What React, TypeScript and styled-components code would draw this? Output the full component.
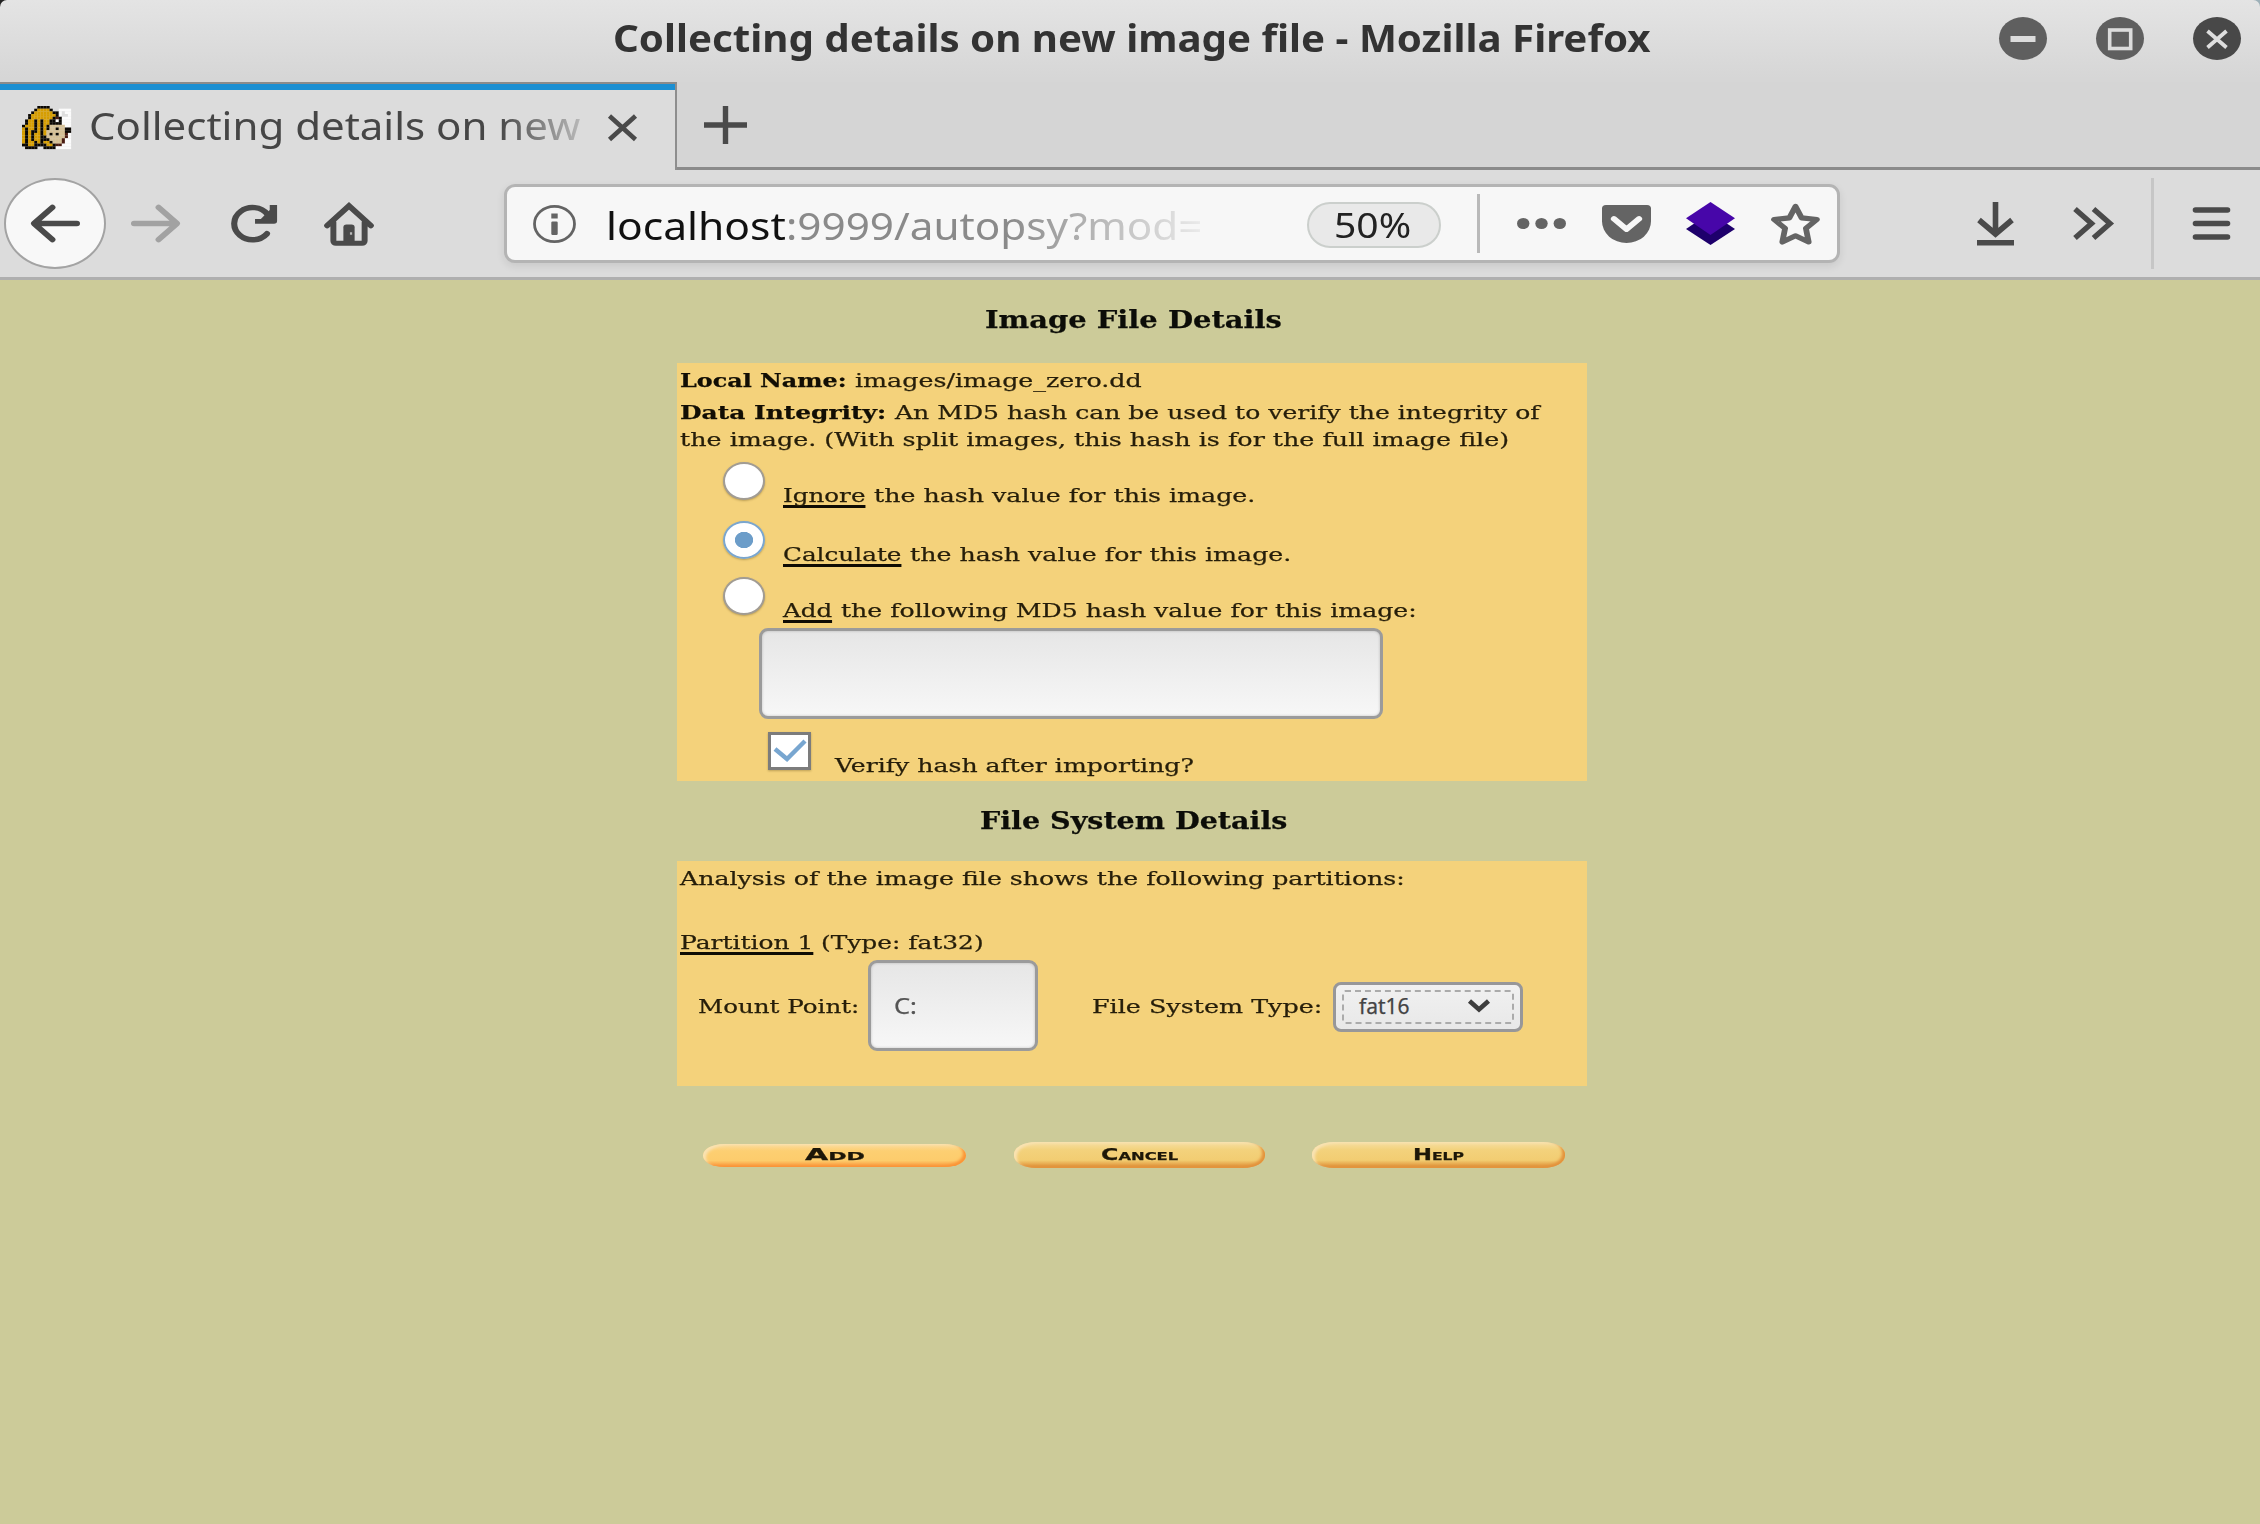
import React, { useLayoutEffect, useRef, useState } from "react";
import styled, { createGlobalStyle } from "styled-components";

const Global = createGlobalStyle`
  * { box-sizing: border-box; }
  body { margin: 0; background: #cccb99; }
`;

const sans = `"Noto Sans", "Open Sans", sans-serif`;
const serif = `"DejaVu Serif", "Liberation Serif", serif`;

/* ---------- text that is stretched to a fixed width ---------- */

const FitBox = styled.span<{ $w: number; $ml?: number }>`
  display: block;
  flex: none;
  width: ${(p) => p.$w}px;
  margin-left: ${(p) => p.$ml ?? 0}px;
  white-space: nowrap;
`;

const FitInner = styled.span<{ $u?: boolean }>`
  display: inline-block;
  transform-origin: 0 50%;
  text-decoration: ${(p) => (p.$u ? "underline" : "none")};
  text-decoration-color: #0f0c04;
  text-decoration-thickness: 2.5px;
  text-underline-offset: 3px;
  text-decoration-skip-ink: none;
`;

function Fit({ w, ml, u, children }: { w: number; ml?: number; u?: boolean; children: React.ReactNode }) {
  const ref = useRef<HTMLSpanElement>(null);
  const [scale, setScale] = useState(1);
  useLayoutEffect(() => {
    if (ref.current) setScale(w / ref.current.offsetWidth);
  }, [w]);
  return (
    <FitBox $w={w} $ml={ml}>
      <FitInner ref={ref} $u={u} style={{ transform: `scaleX(${scale})` }}>
        {children}
      </FitInner>
    </FitBox>
  );
}

/* ---------- window chrome ---------- */

const Window = styled.div`
  width: 2260px;
  height: 1524px;
  overflow: hidden;
  background: #cccb99;
  display: flex;
  flex-direction: column;
`;

const TitleBarBack = styled.div`
  flex: none;
  background: linear-gradient(90deg, #222 50%, #9db0b8 50%);
`;

const TitleBar = styled.header`
  height: 82px;
  display: flex;
  align-items: flex-start;
  border-radius: 7px 7px 0 0;
  background: linear-gradient(#e4e4e4, #d6d6d6 78px);
  font: bold 38px/52px ${sans};
  color: #333;
`;

const TitleText = styled.div`
  margin: 11px 0 0 613px;
`;

const WindowButtons = styled.div`
  display: flex;
  gap: 49px;
  margin: 17px 0 0 348px;
`;

const TabStrip = styled.div`
  flex: none;
  height: 88px;
  display: flex;
  background: #d5d5d5;
`;

const Tab = styled.div`
  width: 677px;
  border-top: 2px solid #8b8b8b;
  border-right: 2px solid #8e8e8e;
  background: #dcdcdc;
`;

const TabInner = styled.div`
  height: 86px;
  border-top: 6px solid #1b8fd2;
  display: flex;
  align-items: flex-start;
  padding-left: 22px;
  font: 39px/52px ${sans};
  color: #464646;
`;

const TabLabel = styled.div`
  margin: 9px 0 0 16px;
  width: 495px;
  padding-left: 2px;
  mask-image: linear-gradient(90deg, #000 410px, rgba(0, 0, 0, 0.25) 492px);
`;

const StripRest = styled.div`
  flex: 1;
  border-bottom: 3px solid #8b8b8b;
  padding: 24px 0 0 27px;
`;

const Toolbar = styled.nav`
  flex: none;
  height: 110px;
  border-bottom: 3px solid #afafaf;
  background: #dcdcdc;
  display: flex;
  align-items: center;
`;

const BackButton = styled.button`
  flex: none;
  width: 102px;
  height: 91px;
  margin-left: 4px;
  padding: 0 0 0 1px;
  border: 2px solid #a3a3a3;
  border-radius: 50%;
  background: #f8f8f8;
  display: flex;
  align-items: center;
  justify-content: center;
`;

const Svg = styled.svg<{ $ml?: number; $mt?: number }>`
  display: block;
  flex: none;
  overflow: visible;
  margin-left: ${(p) => p.$ml ?? 0}px;
  margin-top: ${(p) => p.$mt ?? 0}px;
`;

const UrlBar = styled.div`
  flex: none;
  width: 1336px;
  height: 79px;
  margin-left: 130px;
  border: 3px solid #b4b4b4;
  border-radius: 11px;
  background: #f7f7f7;
  box-shadow: 0 3px 9px rgba(0, 0, 0, 0.09);
  display: flex;
  align-items: center;
  font: 39px/52px ${sans};
`;

const UrlText = styled.div`
  display: flex;
  width: 600px;
  margin: 2px 0 0 30px;
  color: #8a8a8a;
  mask-image: linear-gradient(90deg, #000 400px, rgba(0, 0, 0, 0.12) 594px);
`;

const Host = styled.div`
  color: #111;
`;

const Zoom = styled.div`
  width: 134px;
  height: 46px;
  margin: 3px 0 0 101px;
  padding-left: 25px;
  border: 2px solid #cbcfcc;
  border-radius: 24px;
  background: #e9e9e9;
  color: #222;
  font: 34px/42px ${sans};
`;

const Rule = styled.div<{ $h: number; $ml: number; $c: string }>`
  width: 3px;
  height: ${(p) => p.$h}px;
  margin-left: ${(p) => p.$ml}px;
  background: ${(p) => p.$c};
`;

/* ---------- page ---------- */

const Page = styled.main`
  width: 910px;
  margin-left: 677px;
  font: 18px/27px ${serif};
  color: #261e0a;
  -webkit-text-stroke: 0.25px currentColor;
`;

const Heading = styled.h3<{ $h: number; $pt: number; $pl: number }>`
  margin: 0;
  height: ${(p) => p.$h}px;
  padding: ${(p) => p.$pt}px 0 0 ${(p) => p.$pl}px;
  font: bold 24px/30px ${serif};
  color: #0c0d08;
`;

const Panel = styled.section<{ $h: number }>`
  height: ${(p) => p.$h}px;
  padding: 4px 0 0 3px;
  background: #f4d27b;
`;

const Line = styled.div<{ $mt?: number }>`
  display: flex;
  margin-top: ${(p) => p.$mt ?? 0}px;
`;

const Strong = styled.b`
  color: #120e04;
`;

const OptionRow = styled.div<{ $h: number; $pl?: number }>`
  display: flex;
  align-items: flex-start;
  height: ${(p) => p.$h}px;
  padding-left: ${(p) => p.$pl ?? 43}px;
`;

const Radio = styled.span<{ $on?: boolean }>`
  flex: none;
  width: 42px;
  height: 38px;
  margin: 9px 18px 0 0;
  border-radius: 50%;
  border: 2px solid ${(p) => (p.$on ? "#7aa6cf" : "#a19c94")};
  background: ${(p) => (p.$on ? "radial-gradient(9.5px 8.5px at center, #6c9dc9 92%, #fff 100%)" : "#fff")};
  box-shadow: 0 1px 2px rgba(90, 70, 20, 0.35);
`;

const Label = styled.label<{ $mt: number }>`
  display: flex;
  margin-top: ${(p) => p.$mt}px;
`;

const Check = styled.span`
  flex: none;
  width: 43px;
  height: 38px;
  margin: 13px 24px 0 0;
  border: 3px solid #7c7c7c;
  background: #fff;
  box-shadow: 0 1px 2px rgba(90, 70, 20, 0.35);
`;

const Field = styled.div<{ $w: number; $ml: number }>`
  flex: none;
  width: ${(p) => p.$w}px;
  height: 91px;
  margin-left: ${(p) => p.$ml}px;
  padding: 30px 0 0 23px;
  border: 3px solid #9b9b9b;
  border-radius: 9px;
  background: linear-gradient(#e6e6e6, #f7f7f7);
  box-shadow: inset 0 0 3px rgba(0, 0, 0, 0.2);
  font: 21px/27px ${sans};
  color: #555;
`;

const MountRow = styled.div`
  display: flex;
  align-items: flex-start;
  margin-top: 4px;
`;

const MountLabel = styled.div<{ $ml: number }>`
  margin: 33px 0 0 ${(p) => p.$ml}px;
`;

const Select = styled.div`
  width: 190px;
  height: 50px;
  margin: 22px 0 0 11px;
  padding: 5px 6px;
  border: 3px solid #979799;
  border-radius: 8px;
  background: linear-gradient(#f1f1f1, #e8e8e8);
`;

const SelectInner = styled.div`
  height: 34px;
  display: flex;
  align-items: center;
  border: 2px dashed #ababab;
  border-radius: 3px;
  padding: 0 0 2px 15px;
  font: 21px/27px ${sans};
  color: #444;
`;

const Actions = styled.div`
  display: flex;
  align-items: flex-start;
  padding: 56px 0 0 26px;
`;

const Pill = styled.button<{ $w: number; $ml?: number; $add?: boolean; $pl: number }>`
  flex: none;
  width: ${(p) => p.$w}px;
  height: ${(p) => (p.$add ? 23 : 26)}px;
  margin: ${(p) => (p.$add ? 2 : 0)}px 0 0 ${(p) => p.$ml ?? 0}px;
  padding: 0 0 0 ${(p) => p.$pl}px;
  border: 0;
  border-radius: 22px / 12px;
  background: ${(p) =>
    p.$add
      ? "linear-gradient(#fbdc9c, #fdcf72 30%, #fdcc6c 72%, #fa9a3e 96%)"
      : "linear-gradient(#f6dfa4, #f3d27c 30%, #f2cd72 70%, #e2983f 92%)"};
  box-shadow: inset -4px -2px 3px -1px ${(p) => (p.$add ? "#fb9436" : "#e3923c")},
    inset 4px 2px 3px -1px #f9e3b4;
  font: ${(p) => (p.$add ? 15 : 16)}px/${(p) => (p.$add ? 21 : 24)}px "DejaVu Sans", sans-serif;
  font-weight: bold;
  font-variant: small-caps;
  text-align: left;
  color: #1d1708;
`;

/* ---------- favicon, drawn from a pixel map ---------- */

const PIXELS = [
  ".....KKKK.......",
  "....KYYYYK..WWWW",
  "...KYYYYYYKKWGWW",
  "..KYYYYYYYYKWGGW",
  "..KYYYYYYYKRKWWW",
  ".KYYKYKYYKKWKWWW",
  ".KYYKYKYYKKKKWWW",
  "KYYYKYKYKTTTTTWW",
  "YKYYKYKYKTTKTTKK",
  "YKYKKYKYTTTTTTKK",
  "YKYKYYKYTKTKTTRW",
  "YKYKYYKKTTTTTTRW",
  "YKYKYYKKKTTTTRWW",
  "YKYYKYKYYKTTTRWW",
  "KKYYKKKKYYKRRWWW",
  ".KKKK..KKKKWWWWW",
];
const INK: Record<string, string> = {
  K: "#0a0703",
  Y: "#d69d00",
  T: "#d5c096",
  W: "#fbfbfb",
  G: "#dedede",
  R: "#4a1c12",
};

function Favicon() {
  return (
    <Svg $mt={16} width={49} height={43} viewBox="0 0 16 16" preserveAspectRatio="none">
      {PIXELS.map((row, y) =>
        row.split("").map((c, x) =>
          c === "." ? null : <rect key={`${x}-${y}`} x={x} y={y} width={1.04} height={1.04} fill={INK[c]} />
        )
      )}
    </Svg>
  );
}

/* ---------- icons ---------- */

function Icon({ w = 49, h = 43, ml, mt, box = "0 0 16 16", children }: any) {
  return (
    <Svg $ml={ml} $mt={mt} width={w} height={h} viewBox={box} preserveAspectRatio="none">
      {children}
    </Svg>
  );
}

const ARROW =
  "M15 7H3.414l4.293-4.293a1 1 0 0 0-1.414-1.414l-6 6a1 1 0 0 0 0 1.414l6 6a1 1 0 0 0 1.414-1.414L3.414 9H15a1 1 0 0 0 0-2z";
const DARK = "#4a4a4a";
const MID = "#646464";

function WinButton({ fill, children }: { fill: string; children: React.ReactNode }) {
  return (
    <Svg width={48} height={43} viewBox="0 0 48 43">
      <ellipse cx={24} cy={21.5} rx={24} ry={21.5} fill={fill} />
      {children}
    </Svg>
  );
}

export default function App() {
  return (
    <Window>
      <Global />
      <TitleBarBack>
        <TitleBar>
          <TitleText>
            <Fit w={1038}>Collecting details on new image file - Mozilla Firefox</Fit>
          </TitleText>
          <WindowButtons>
            <WinButton fill="#5f5f5f">
              <rect x={11.5} y={19} width={25} height={6} fill="#dcdcdc" />
            </WinButton>
            <WinButton fill="#5f5f5f">
              <rect x={13.7} y={13} width={21} height={18.5} fill="none" stroke="#dcdcdc" strokeWidth={3.6} />
            </WinButton>
            <WinButton fill="#484848">
              <path d="M14.5 14L33.5 30.5M33.5 14L14.5 30.5" stroke="#dedede" strokeWidth={3.8} />
            </WinButton>
          </WindowButtons>
        </TitleBar>
      </TitleBarBack>

      <TabStrip>
        <Tab>
          <TabInner>
            <Favicon />
            <TabLabel>
              <Fit w={491}>Collecting details on new</Fit>
            </TabLabel>
            <Icon w={31} h={27} ml={25} mt={24} box="0 0 31 27">
              <path d="M2.5 2L28.5 25.5M28.5 2L2.5 25.5" stroke={DARK} strokeWidth={4.6} />
            </Icon>
          </TabInner>
        </Tab>
        <StripRest>
          <Icon w={43} h={38} box="0 0 43 38">
            <path d="M21.5 0V38M0 19H43" stroke={DARK} strokeWidth={5.4} />
          </Icon>
        </StripRest>
      </TabStrip>

      <Toolbar>
        <BackButton>
          <Icon>
            <path d={ARROW} fill={DARK} />
          </Icon>
        </BackButton>
        <Icon ml={25}>
          <path d={ARROW} fill="#a2a2a2" transform="translate(16 0) scale(-1 1)" />
        </Icon>
        <Icon ml={49}>
          <path d="M12.6 4.6A6 6 0 1 0 12.4 11.8" fill="none" stroke={DARK} strokeWidth={2} strokeLinecap="round" />
          <path d="M15.7 1.1V7.1a1 1 0 0 1-1 1H8.5V6.3h1.9L13.3 3V1.1z" fill={DARK} />
        </Icon>
        <Icon ml={46} w={50} h={44}>
          <path
            d="M1 8.6L8 1.4l7 7.2M3 7.4V14.2a.8.8 0 0 0 .8.8h8.4a.8.8 0 0 0 .8-.8V7.4"
            fill="none"
            stroke={DARK}
            strokeWidth={1.9}
            strokeLinecap="round"
          />
          <path d="M6.2 15.3V9.2a1 1 0 0 1 1-1h1.6a1 1 0 0 1 1 1v6.1z" fill={DARK} />
          <rect x={8.3} y={11} width={0.7} height={0.9} fill="#bbb" />
        </Icon>

        <UrlBar>
          <Icon ml={26} w={43} h={38} box="0 0 43 38">
            <ellipse cx={21.5} cy={19} rx={20} ry={17.6} fill="none" stroke={MID} strokeWidth={2.8} />
            <rect x={18.3} y={8.5} width={6.4} height={5} fill={MID} />
            <rect x={18.3} y={16.5} width={6.4} height={13.5} rx={1.2} fill={MID} />
          </Icon>
          <UrlText>
            <Host>
              <Fit w={180}>localhost</Fit>
            </Host>
            <Fit w={416}>:9999/autopsy?mod=</Fit>
          </UrlText>
          <Zoom>
            <Fit w={77}>50%</Fit>
          </Zoom>
          <Rule $h={59} $ml={36} $c="#b9b9b9" />
          <Icon ml={37} w={49} h={11} box="0 0 49 11">
            {[6.2, 24.5, 42.8].map((x) => (
              <ellipse key={x} cx={x} cy={5.5} rx={6.2} ry={5.5} fill={MID} />
            ))}
          </Icon>
          <Icon ml={36} h={38} box="0 0 16 14">
            <path d="M1.3 0h13.4A1.3 1.3 0 0 1 16 1.3V6A8 8 0 0 1 0 6V1.3A1.3 1.3 0 0 1 1.3 0z" fill={MID} />
            <path
              d="M3.9 5.1L8 8.9l4.1-3.8"
              fill="none"
              stroke="#f7f7f7"
              strokeWidth={2}
              strokeLinecap="round"
              strokeLinejoin="round"
            />
          </Icon>
          <Icon ml={35} h={43} box="0 0 49 43">
            <path d="M0 27L24.5 10.5 49 27 24.5 43z" fill="#1e006c" />
            <path d="M0 16.3L24.5 0 49 16.3 24.5 33z" fill="#4706a9" />
          </Icon>
          <Icon ml={36} h={43}>
            <path
              d="M8 1.6l2 4.3 5 .6-3.6 3.3.9 5.1L8 12.6l-4.3 2.3.9-5.1L1 6.5l5-.6z"
              fill="none"
              stroke={MID}
              strokeWidth={1.9}
              strokeLinejoin="round"
            />
          </Icon>
        </UrlBar>

        <Icon ml={137} w={37} h={44} box="0 0 37 44">
          <path d="M18.5 0V31M2 18L18.5 32 35 18" fill="none" stroke={DARK} strokeWidth={5.6} />
          <path d="M0 40.8H37" stroke={DARK} strokeWidth={5.6} />
        </Icon>
        <Icon ml={59} w={41} h={33} box="0 0 41 33">
          <path d="M2 2L18.5 16.5 2 31M20.5 2L37 16.5 20.5 31" fill="none" stroke={DARK} strokeWidth={5.4} />
        </Icon>
        <Rule $h={91} $ml={37} $c="#c6c6c6" />
        <Icon ml={39} w={37} h={33} box="0 0 37 33">
          <path d="M2.5 3h32M2.5 16.5h32M2.5 30h32" stroke={DARK} strokeWidth={5.6} strokeLinecap="round" />
        </Icon>
      </Toolbar>

      <Page>
        <Heading $h={83} $pt={25} $pl={308}>
          <Fit w={297}>Image File Details</Fit>
        </Heading>
        <Panel $h={418}>
          <Line>
            <Strong>
              <Fit w={167}>Local Name:</Fit>
            </Strong>
            <Fit w={287} ml={8}>images/image_zero.dd</Fit>
          </Line>
          <Line $mt={5}>
            <Strong>
              <Fit w={206}>Data Integrity:</Fit>
            </Strong>
            <Fit w={644} ml={9}>An MD5 hash can be used to verify the integrity of</Fit>
          </Line>
          <Line>
            <Fit w={829}>the image. (With split images, this hash is for the full image file)</Fit>
          </Line>
          <OptionRow $h={59}>
            <Radio />
            <Label $mt={29}>
              <Fit w={82} u>Ignore</Fit>
              <Fit w={382} ml={9}>the hash value for this image.</Fit>
            </Label>
          </OptionRow>
          <OptionRow $h={56}>
            <Radio $on />
            <Label $mt={29}>
              <Fit w={118} u>Calculate</Fit>
              <Fit w={382} ml={9}>the hash value for this image.</Fit>
            </Label>
          </OptionRow>
          <OptionRow $h={60}>
            <Radio />
            <Label $mt={29}>
              <Fit w={49} u>Add</Fit>
              <Fit w={576} ml={9}>the following MD5 hash value for this image:</Fit>
            </Label>
          </OptionRow>
          <Field $w={624} $ml={79} />
          <OptionRow $h={62} $pl={88}>
            <Check>
              <Icon w={37} h={32} box="0 0 37 32">
                <path d="M4 14L16 24 34 6" fill="none" stroke="#78a6d0" strokeWidth={4.4} />
              </Icon>
            </Check>
            <Label $mt={33}>
              <Fit w={359}>Verify hash after importing?</Fit>
            </Label>
          </OptionRow>
        </Panel>

        <Heading $h={80} $pt={25} $pl={303}>
          <Fit w={307}>File System Details</Fit>
        </Heading>
        <Panel $h={225}>
          <Line>
            <Fit w={725}>Analysis of the image file shows the following partitions:</Fit>
          </Line>
          <Line $mt={37}>
            <Fit w={133} u>Partition 1</Fit>
            <Fit w={163} ml={8}>(Type: fat32)</Fit>
          </Line>
          <MountRow>
            <MountLabel $ml={18}>
              <Fit w={161}>Mount Point:</Fit>
            </MountLabel>
            <Field $w={170} $ml={9}>
              <Fit w={23}>C:</Fit>
            </Field>
            <MountLabel $ml={54}>
              <Fit w={230}>File System Type:</Fit>
            </MountLabel>
            <Select>
              <SelectInner>
                <Fit w={51}>fat16</Fit>
                <Icon w={22} h={14} ml={58} box="0 0 22 14">
                  <path d="M1.5 2L11 10.5 20.5 2" fill="none" stroke="#3e3e3e" strokeWidth={4.6} />
                </Icon>
              </SelectInner>
            </Select>
          </MountRow>
        </Panel>

        <Actions>
          <Pill $w={263} $pl={102} $add>
            <Fit w={60}>Add</Fit>
          </Pill>
          <Pill $w={251} $ml={48} $pl={87}>
            <Fit w={77}>Cancel</Fit>
          </Pill>
          <Pill $w={253} $ml={47} $pl={101}>
            <Fit w={51}>Help</Fit>
          </Pill>
        </Actions>
      </Page>
    </Window>
  );
}
